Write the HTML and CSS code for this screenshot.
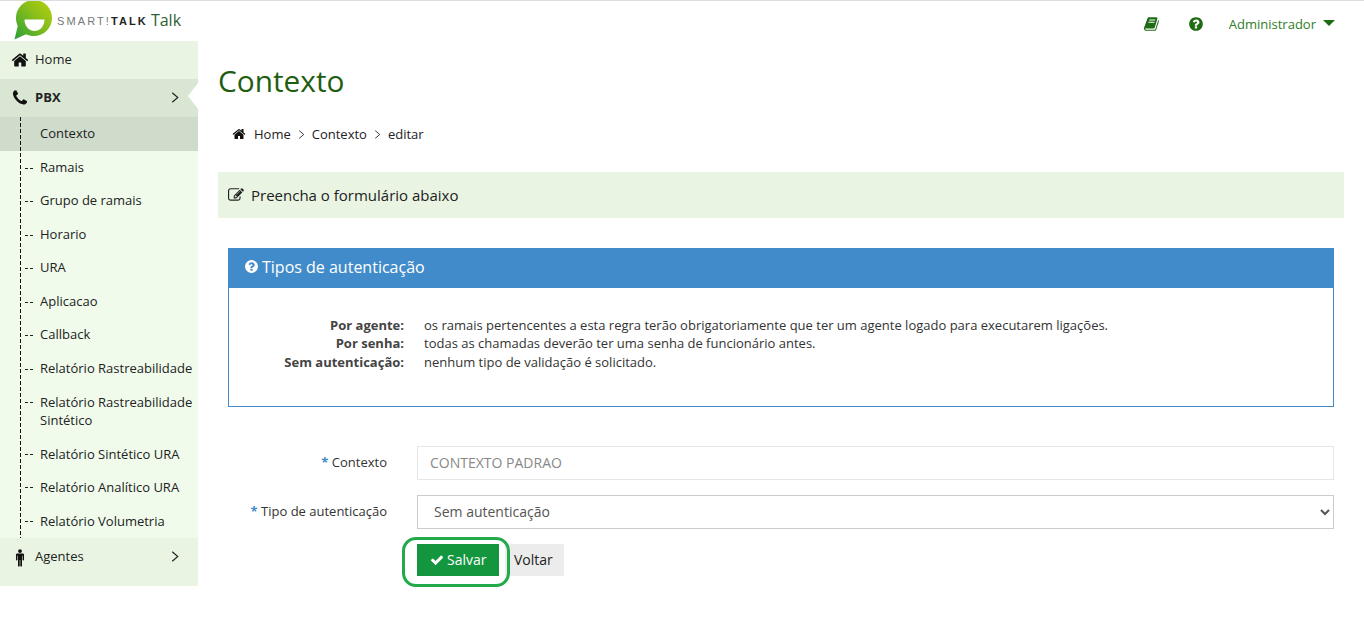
FILE: index.html
```html
<!DOCTYPE html>
<html lang="pt-BR">
<head>
<meta charset="utf-8">
<title>Contexto</title>
<link rel="stylesheet" href="styles.css">
</head>
<body>
<svg class="defs" width="0" height="0" aria-hidden="true">
  <defs>
    <linearGradient id="logo-grad" x1="0" y1="1" x2="1" y2="0">
      <stop offset="0" stop-color="#2a9f38"/>
      <stop offset="0.55" stop-color="#86bd1c"/>
      <stop offset="1" stop-color="#bad10c"/>
    </linearGradient>
    <symbol id="i-home" viewBox="0 0 1792 1792"><path d="M1472 992v480q0 26-19 45t-45 19h-384v-384h-256v384h-384q-26 0-45-19t-19-45v-480q0-1 .5-3t.5-3l575-474 575 474q1 2 1 6zm223-69l-62 74q-8 9-21 11h-3q-13 0-21-7l-692-577-692 577q-12 8-24 7-13-2-21-11l-62-74q-8-10-7-23.5t11-21.5l719-599q32-26 76-26t76 26l244 204v-195q0-14 9-23t23-9h192q14 0 23 9t9 23v408l219 182q10 8 11 21.5t-7 23.5z"/></symbol>
    <symbol id="i-phone" viewBox="0 0 1792 1792"><path d="M1600 1240q0 27-10 70.5t-21 68.5q-21 50-122 106-94 51-186 51-27 0-53-3.5t-57.5-12.5-47-14.5-55.5-20.5-49-18q-98-35-175-83-127-79-264-216t-216-264q-48-77-83-175-3-9-18-49t-20.5-55.5-14.5-47-12.5-57.5-3.5-53q0-92 51-186 56-101 106-122 25-11 68.5-21t70.5-10q14 0 21 3 18 6 53 76 11 19 30 54t35 63.5 31 53.5q3 4 17.5 25t21.5 35.5 7 28.5q0 20-28.5 50t-62 55-62 53-28.5 46q0 9 5 22.5t8.5 20.5 14 24 11.5 19q76 137 174 235t235 174q2 1 19 11.5t24 14 20.5 8.5 22.5 5q18 0 46-28.5t53-62 55-62 50-28.5q14 0 28.5 7t35.5 21.5 25 17.5q25 15 53.5 31t63.5 35 54 30q70 35 76 53 3 7 3 21z"/></symbol>
    <symbol id="i-question" viewBox="0 0 1792 1792"><path d="M1024 1376v-192q0-14-9-23t-23-9h-192q-14 0-23 9t-9 23v192q0 14 9 23t23 9h192q14 0 23-9t9-23zm256-672q0-88-55.5-163t-138.5-116-170-41q-243 0-371 213-15 24 8 42l132 100q7 6 19 6 16 0 25-12 53-68 86-92 34-24 86-24 48 0 85.5 26t37.5 59q0 38-20 61t-68 45q-63 28-115.5 86.5t-52.5 125.5v36q0 14 9 23t23 9h192q14 0 23-9t9-23q0-19 21.5-49.5t54.5-49.5q32-18 49-28.5t46-35 44.5-48 28-60.5 12.5-81zm384 192q0 209-103 385.5t-279.5 279.5-385.5 103-385.5-103-279.5-279.5-103-385.5 103-385.5 279.5-279.5 385.5-103 385.5 103 279.5 279.5 103 385.5z"/></symbol>
    <symbol id="i-check" viewBox="0 0 1792 1792"><path d="M1671 566q0 40-28 68l-724 724-136 136q-28 28-68 28t-68-28l-136-136-362-362q-28-28-28-68t28-68l136-136q28-28 68-28t68 28l294 295 656-657q28-28 68-28t68 28l136 136q28 28 28 68z"/></symbol>
    <symbol id="i-book" viewBox="0 0 1792 1792"><path d="M1639 478q40 57 18 129l-275 906q-19 64-76.500 107.500t-122.500 43.500h-923q-77 0-148.500-53.500t-99.500-131.500q-24-67-2-127 0-4 3-27t4-37q1-8-3-21.500t-3-19.500q2-11 8-21t16.500-23.500 16.500-23.500q23-38 45-91.500t30-91.500q3-10 .5-30t-.5-28q3-11 17-28t17-23q21-36 42-92t25-90q1-9-2.500-32t.5-28q4-13 22-30.500t22-22.500q19-26 42.500-84.500t27.500-96.500q1-8-3-25.500t-2-26.500q2-8 9-18t18-23 17-21q8-12 16.500-30.500t15-35 16-36 19.500-32 26.500-23.500 36-11.500 47.500 5.500l-1 3q38-9 51-9h761q74 0 114 56t18 130l-274 906q-36 119-71.500 153.500t-128.500 34.500h-869q-27 0-38 15-11 16-1 43 24 70 144 70h923q29 0 56-15.500t35-41.500l300-987q7-22 5-57 38 15 59 43zm-1064 2q-4 13 2 22.500t20 9.500h608q13 0 25.500-9.500t16.500-22.500l21-64q4-13-2-22.500t-20-9.500h-608q-13 0-25.500 9.500t-16.500 22.500zm-83 256q-4 13 2 22.500t20 9.500h608q13 0 25.500-9.500t16.500-22.500l21-64q4-13-2-22.500t-20-9.500h-608q-13 0-25.500 9.500t-16.500 22.500z"/></symbol>
    <symbol id="i-edit" viewBox="0 0 1792 1792"><path d="M888 1184l116-116-152-152-116 116v56h96v96h56zm440-720q-16-16-33 1l-350 350q-17 17-1 33t33-1l350-350q17-17 1-33zm80 594v190q0 119-84.500 203.500t-203.500 84.500h-832q-119 0-203.500-84.500t-84.500-203.500v-832q0-119 84.500-203.500t203.500-84.500h832q63 0 117 25 15 7 18 23 3 17-9 29l-49 49q-14 14-32 8-23-6-45-6h-832q-66 0-113 47t-47 113v832q0 66 47 113t113 47h832q66 0 113-47t47-113v-126q0-13 9-22l64-64q15-15 35-7t20 29zm-96-738l288 288-672 672h-288v-288zm444 132l-92 92-288-288 92-92q28-28 68-28t68 28l152 152q28 28 28 68t-28 68z"/></symbol>
    <symbol id="i-male" viewBox="0 0 1000 1792"><circle cx="500" cy="210" r="190"/><path d="M230 450h540q130 0 130 130v480q0 80-72 80t-72-80v-400h-56v1000q0 90-90 90t-80-90v-560h-60v560q0 90-80 90t-90-90v-1000h-56v400q0 80-72 80t-72-80v-480q0-130 130-130z"/></symbol>
    <symbol id="i-right" viewBox="0 0 10 14"><path d="M1.500 1 8.500 7l-7 6" fill="none" stroke="currentColor" stroke-width="1.500"/></symbol>
  </defs>
</svg>

<header class="topbar">
  <div class="brand">
    <svg class="logo" viewBox="0 0 40 40" aria-hidden="true">
      <path fill="url(#logo-grad)" d="M20 -1c10 0 18 8 18 18s-8 18-18 18c-3 0-5.500-.6-8-1.800L.5 38.500l3.200-13.500C2.700 22.500 2 20 2 17 2 7 10-1 20-1z"/>
      <path fill="#fff" d="M10.500 18.500h20c0 7-5 11.500-10 11.500s-10-4.500-10-11.500z"/>
    </svg>
    <span class="brand-name">SMART!<b>TALK</b></span>
    <span class="brand-talk">Talk</span>
  </div>
  <nav class="top-actions">
    <svg class="ico top-ico top-book"><use href="#i-book"/></svg>
    <svg class="ico top-ico top-help"><use href="#i-question"/></svg>
    <span class="user">Administrador <i class="caret"></i></span>
  </nav>
</header>

<div class="layout">
  <aside class="sidebar">
    <a class="nav-item"><svg class="ico nav-ico"><use href="#i-home"/></svg>Home</a>
    <a class="nav-item nav-open"><svg class="ico nav-ico"><use href="#i-phone"/></svg>PBX<svg class="ico chev"><use href="#i-right"/></svg></a>
    <ul class="sub">
      <li class="sub-active">Contexto</li>
      <li>Ramais</li>
      <li>Grupo de ramais</li>
      <li>Horario</li>
      <li>URA</li>
      <li>Aplicacao</li>
      <li>Callback</li>
      <li>Relatório Rastreabilidade</li>
      <li>Relatório Rastreabilidade Sintético</li>
      <li>Relatório Sintético URA</li>
      <li>Relatório Analítico URA</li>
      <li>Relatório Volumetria</li>
    </ul>
    <a class="nav-item nav-last"><svg class="ico nav-ico male"><use href="#i-male"/></svg>Agentes<svg class="ico chev"><use href="#i-right"/></svg></a>
  </aside>

  <main class="content">
    <h1 class="title">Contexto</h1>
    <ol class="crumbs">
      <li><svg class="ico crumb-ico"><use href="#i-home"/></svg>Home</li>
      <li class="sep"><svg class="ico"><use href="#i-right"/></svg></li>
      <li>Contexto</li>
      <li class="sep"><svg class="ico"><use href="#i-right"/></svg></li>
      <li>editar</li>
    </ol>
    <div class="form-head"><svg class="ico"><use href="#i-edit"/></svg>Preencha o formulário abaixo</div>

    <section class="panel">
      <h2 class="panel-head"><svg class="ico"><use href="#i-question"/></svg>Tipos de autenticação</h2>
      <dl class="panel-body">
        <dt>Por agente:</dt><dd>os ramais pertencentes a esta regra terão obrigatoriamente que ter um agente logado para executarem ligações.</dd>
        <dt>Por senha:</dt><dd>todas as chamadas deverão ter uma senha de funcionário antes.</dd>
        <dt>Sem autenticação:</dt><dd>nenhum tipo de validação é solicitado.</dd>
      </dl>
    </section>

    <form class="form">
      <div class="row">
        <label class="lbl"><span class="req">*</span> Contexto</label>
        <input class="field field-ro" value="CONTEXTO PADRAO" readonly>
      </div>
      <div class="row row-select">
        <label class="lbl"><span class="req">*</span> Tipo de autenticação</label>
        <select class="field field-sel"><option>Sem autenticação</option></select>
      </div>
      <div class="actions">
        <span class="highlight"><button type="button" class="btn btn-save"><svg class="ico"><use href="#i-check"/></svg>Salvar</button></span>
        <button type="button" class="btn btn-back">Voltar</button>
      </div>
    </form>
  </main>
</div>
</body>
</html>
```
FILE: styles.css
```css
* { box-sizing: border-box; }
html, body { margin: 0; height: 100%; }
body {
  font-family: "Open Sans", "Liberation Sans", sans-serif;
  font-size: 13px;
  color: #222;
  background: #fff;
  border-top: 1px solid #ddd;
  overflow: hidden;
}
.defs { display: block; height: 0; }
.ico { display: block; width: 14px; height: 14px; fill: currentColor; flex: none; overflow: visible; }

.topbar { display: flex; justify-content: space-between; height: 40px; }
.brand { display: flex; align-items: center; padding-left: 14px; }
.logo { width: 40px; height: 40px; margin-right: 3px; overflow: visible; }
.brand-name { font-family: "Liberation Sans", sans-serif; font-size: 11px; letter-spacing: 2.100px; color: #777; margin-top: -1px; }
.brand-name b { color: #222; font-weight: 700; }
.brand-talk { font-size: 16px; color: #2f5d34; margin-left: 3px; margin-top: -3px; }
.top-actions { display: flex; align-items: center; color: #1d6b12; padding: 6px 29px 0 0; }
.top-ico { width: 16px; height: 16px; }
.top-book { margin-right: 28px; }
.top-help { margin-right: 25px; }
.user { font-size: 13px; color: #2f7d28; display: flex; align-items: center; }
.caret { border: 6px solid transparent; border-top: 6px solid #1d6b12; border-bottom: 0; margin-left: 7px; margin-top: -2px; }

.layout { display: flex; align-items: flex-start; }
.sidebar { width: 198px; flex: none; background: #f0fbec; }
.nav-item { position: relative; display: flex; align-items: center; height: 38px; padding: 0 19px 2px 11px; background: #e9f5e2; color: #222; }
.nav-ico { width: 18px; height: 18px; margin: 2px 6px 0 0; color: #111; }
.nav-open { background: #d9e6d3; font-weight: 700; }
.nav-open::after {
  content: "";
  position: absolute;
  right: 0;
  top: 4px;
  border: 13.500px solid transparent;
  border-right: 10px solid #fff;
  border-left: 0;
}
.chev { width: 8px; height: 11px; margin-left: auto; color: #222; }
.nav-last { height: 48px; padding-bottom: 11px; }
.male { margin-top: 4px; }

.sub { list-style: none; margin: 0; padding: 0; position: relative; }
.sub::before {
  content: "";
  position: absolute;
  left: 20px;
  top: 0;
  bottom: 0;
  width: 1px;
  background: repeating-linear-gradient(to bottom, #111 0 4px, transparent 4px 6px);
  z-index: 1;
}
.sub li { position: relative; padding: 6.600px 4px 8.970px 40px; line-height: 18px; }
.sub li:nth-child(9) { padding-bottom: 8.500px; }
.sub li:nth-child(n+10) { padding: 7.750px 4px 7.750px 40px; }
.sub li::before {
  content: "";
  position: absolute;
  left: 25px;
  top: 16.500px;
  width: 8px;
  height: 1px;
  background: repeating-linear-gradient(to right, #222 0 3px, transparent 3px 5px);
}
.sub li.sub-active { background: #cfdbcb; padding-top: 7px; padding-bottom: 9px; }
.sub li.sub-active::before { display: none; }

.content { flex: 1; min-width: 0; padding: 0 20px; }
.title { font-size: 29.800px; font-weight: 400; color: #1f5e10; margin: 21px 0 0; line-height: 38px; }
.crumbs { display: flex; align-items: center; list-style: none; margin: 25px 0 0; padding: 0 0 0 14px; line-height: 18px; color: #222; }
.crumbs li { display: flex; align-items: center; }
.crumb-ico { width: 14px; height: 14px; margin-right: 8px; color: #111; }
.sep { margin: 0 7px; }
.sep .ico { width: 7px; height: 9px; color: #333; }
.form-head { display: flex; align-items: center; height: 46px; margin-top: 29px; padding-left: 10px; background: #e9f5e2; font-size: 15px; color: #222; }
.form-head .ico { width: 16px; height: 16px; margin-right: 7px; }

.panel { margin: 30px 10px 0; border: 1px solid #428bca; }
.panel-head { display: flex; align-items: center; height: 39px; margin: 0; padding: 0 0 4px 15px; background: #428bca; color: #fff; font-size: 16px; font-weight: 400; }
.panel-head .ico { width: 15px; height: 15px; margin-right: 3px; }
.panel-body { display: grid; grid-template-columns: 175px 1fr; column-gap: 20px; margin: 0; padding: 27.900px 0 34.600px; font-size: 13px; line-height: 18.500px; }
.panel-body dt { text-align: right; font-weight: 700; color: #444; }
.panel-body dd { margin: 0; color: #333; }

.form { margin: 39px 10px 0; }
.row { display: flex; align-items: center; }
.row-select { margin-top: 15px; }
.lbl { width: 159px; text-align: right; margin: -2px 30px 0 0; flex: none; color: #333; }
.row-select .lbl { margin-top: -1px; }
.req { color: #428bca; font-weight: 700; }
.field { flex: 1; min-width: 0; height: 34px; font-family: inherit; font-size: 14px; color: #555; background: #fff; }
.field-ro { border: 1px solid #e6e6e6; padding: 0 12px; color: #888; }
.field-sel { border: 1px solid #ccc; padding: 0 12px; }
.actions { display: flex; align-items: center; margin-top: 15px; padding-left: 189px; }
.highlight { display: block; position: relative; z-index: 1; }
.highlight::after {
  content: "";
  position: absolute;
  left: -15px;
  top: -7px;
  right: -11px;
  bottom: -11px;
  border: 3px solid #22aa4a;
  border-radius: 14px;
  pointer-events: none;
}
.btn { height: 32px; border: 0; font-family: inherit; font-size: 14px; }
.btn-save { display: flex; align-items: center; width: 82px; padding: 0 0 0 13px; background: #14963f; color: #fff; }
.btn-save .ico { width: 14px; height: 14px; margin-right: 3px; }
.btn-back { width: 59px; margin-left: 6px; padding: 0 0 0 9px; background: #ececec; color: #222; text-align: left; }
```
